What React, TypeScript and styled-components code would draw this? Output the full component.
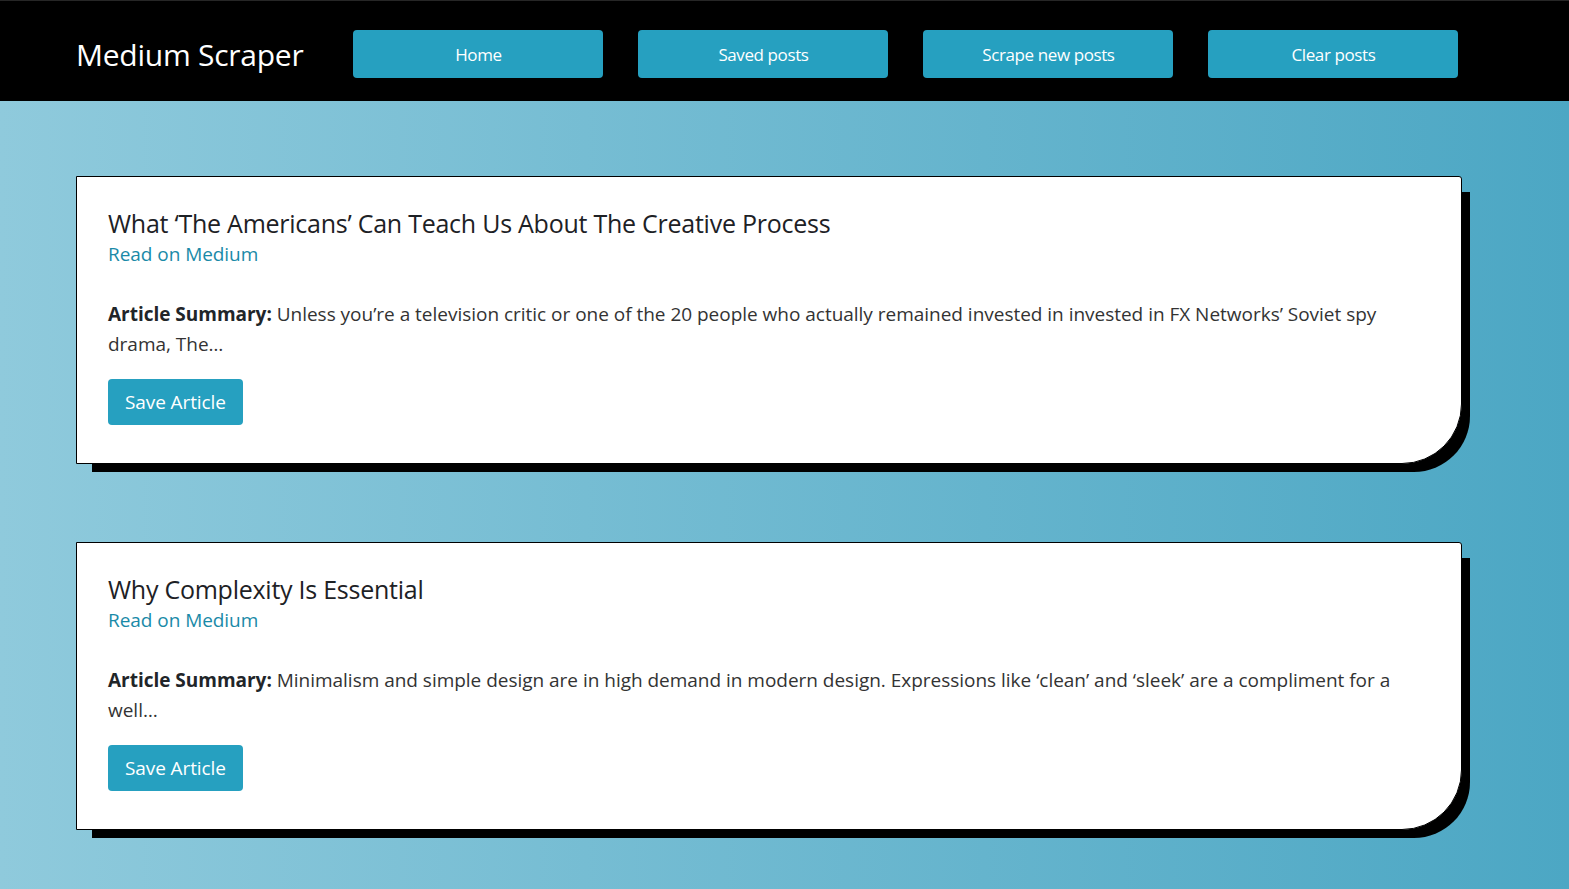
import React from "react";
import styled, { createGlobalStyle } from "styled-components";

const GlobalStyle = createGlobalStyle`
  * { box-sizing: border-box; }
  html, body { margin: 0; padding: 0; }
  body {
    font-family: "Open Sans", "Noto Sans", sans-serif;
    color: #212529;
    min-height: 889px;
    background: linear-gradient(90deg, #8fcadc 0%, #4ca7c4 100%);
  }
`;

const Page = styled.div`
  min-height: 889px;
  display: flex;
  flex-direction: column;
`;

const Header = styled.header`
  height: 101px;
  background: #000;
  border-top: 1px solid #262626;
  display: flex;
  align-items: center;
  padding: 6px 76px 0;
  gap: 35px;
`;

const Brand = styled.h1`
  margin: 0 15px 0 0;
  font-size: 30px;
  font-weight: 400;
  color: #fff;
  letter-spacing: -0.25px;
  white-space: nowrap;
`;

const Nav = styled.nav`
  display: flex;
  gap: 35px;
`;

const NavButton = styled.button`
  width: 250px;
  height: 48px;
  border: none;
  border-radius: 4px;
  background: #26a0c0;
  color: #fff;
  font-family: inherit;
  font-size: 17px;
  letter-spacing: -0.4px;
  cursor: pointer;
`;

const Main = styled.main`
  display: flex;
  flex-direction: column;
  gap: 78px;
  padding: 75px 107px 60px 76px;
`;

const Card = styled.article`
  background: #fff;
  border: 1px solid #000;
  border-radius: 0 3px 60px 0;
  box-shadow: 12px 12px 0 -4px #000;
  height: 288px;
  padding: 31px 31px 0;
`;

const Title = styled.h2`
  margin: 0;
  font-size: 25px;
  line-height: 31px;
  font-weight: 500;
  letter-spacing: -0.25px;
  color: #1d2125;
`;

const ReadLink = styled.a`
  display: block;
  font-size: 19px;
  line-height: 30px;
  color: #1a8aa8;
  text-decoration: none;
  letter-spacing: -0.05px;
`;

const Summary = styled.p`
  margin: 30px 0 20px;
  font-size: 19px;
  line-height: 30px;
  letter-spacing: -0.02px;
  color: #333;
`;

const Label = styled.strong`
  font-weight: 700;
  color: #212529;
`;

const SaveButton = styled.button`
  height: 46px;
  padding: 0 17px;
  border: none;
  border-radius: 4px;
  background: #26a0c0;
  color: #fff;
  font-family: inherit;
  font-size: 19px;
  letter-spacing: -0.1px;
  cursor: pointer;
`;

const articles = [
  {
    title: "What \u2018The Americans\u2019 Can Teach Us About The Creative Process",
    summary:
      "Unless you\u2019re a television critic or one of the 20 people who actually remained invested in invested in FX Networks\u2019 Soviet spy drama, The\u2026",
  },
  {
    title: "Why Complexity Is Essential",
    summary:
      "Minimalism and simple design are in high demand in modern design. Expressions like \u2018clean\u2019 and \u2018sleek\u2019 are a compliment for a well\u2026",
  },
];

export default function App() {
  return (
    <Page>
      <GlobalStyle />
      <Header>
        <Brand>Medium Scraper</Brand>
        <Nav>
          <NavButton>Home</NavButton>
          <NavButton>Saved posts</NavButton>
          <NavButton>Scrape new posts</NavButton>
          <NavButton>Clear posts</NavButton>
        </Nav>
      </Header>
      <Main>
        {articles.map((a) => (
          <Card key={a.title}>
            <Title>{a.title}</Title>
            <ReadLink href="#">Read on Medium</ReadLink>
            <Summary>
              <Label>Article Summary:</Label> {a.summary}
            </Summary>
            <SaveButton>Save Article</SaveButton>
          </Card>
        ))}
      </Main>
    </Page>
  );
}
